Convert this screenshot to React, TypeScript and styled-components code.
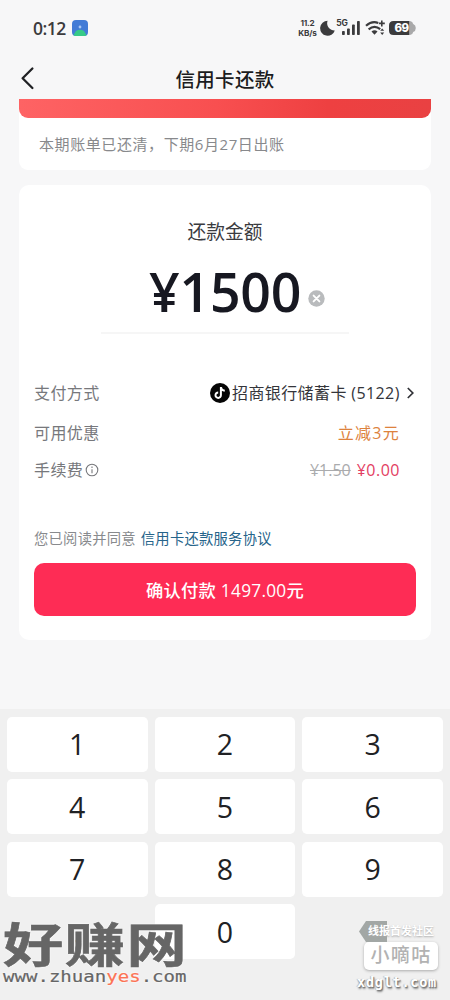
import React from 'react';
import styled, { createGlobalStyle } from 'styled-components';

const Global = createGlobalStyle`
  *, *::before, *::after { box-sizing: border-box; }
  body { margin: 0; background: #f7f7f8; }
  button { border: 0; padding: 0; font: inherit; color: inherit; }
`;

const Screen = styled.div`
  width: 450px;
  height: 1000px;
  overflow: hidden;
  position: relative;
  display: flex;
  flex-direction: column;
  background: #f7f7f8;
  color: #24262d;
  font-family: 'Open Sans', 'Noto Sans CJK SC', sans-serif;
  white-space: nowrap;
`;

const StatusBar = styled.header`
  height: 55px;
  flex: none;
  padding: 0 32px 0 33px;
  display: flex;
  align-items: center;
  color: #3b3b3d;
`;

const Clock = styled.span`
  font: 600 17.5px/24px 'Open Sans', sans-serif;
  width: 34px;
  letter-spacing: -0.5px;
`;

const AppBadge = styled.svg`
  width: 16px;
  height: 16px;
  margin-left: 5px;
`;

const StatusIcons = styled.div`
  margin-left: auto;
  display: flex;
  align-items: center;
`;

const Speed = styled.div`
  font: 700 8.2px/10px Inter, sans-serif;
  width: 19px;
  display: flex;
  flex-direction: column;
  align-items: center;
  letter-spacing: -0.2px;
`;

const StatusGlyphs = styled.svg`
  width: 98px;
  height: 20px;
  margin-left: 3px;
`;

const NavBar = styled.nav`
  height: 44px;
  flex: none;
  display: grid;
  grid-template-columns: 50px 1fr 50px;
  align-items: center;
  padding-top: 2px;
`;

const BackButton = styled.button`
  background: none;
  height: 26px;
  padding-left: 20px;
  display: flex;
  align-items: center;
`;

const Title = styled.h1`
  margin: 3px 0 0;
  text-align: center;
  font-size: 19.5px;
  line-height: 28px;
  font-weight: 500;
  letter-spacing: 0.3px;
  color: #1b1c20;
`;

const Main = styled.main`
  padding: 0 19px;
  flex: 1;
  display: flex;
  flex-direction: column;
  gap: 15px;
`;

const BillCard = styled.section`
  height: 71px;
  background: #fff;
  border-radius: 0 0 9px 9px;
`;

const Banner = styled.div`
  height: 19px;
  border-radius: 0 0 9px 9px;
  background: linear-gradient(90deg, #fe6364, #f84f50 48%, #ee4041 75%, #e94142);
`;

const BillNote = styled.p`
  margin: 0;
  padding: 14px 20px;
  font-size: 15px;
  line-height: 24px;
  letter-spacing: 0.58px;
  color: #88898c;
`;

const PayCard = styled.section`
  height: 455px;
  background: #fff;
  border-radius: 10px;
  padding: 33px 15px 0;
  display: flex;
  flex-direction: column;
`;

const AmountLabel = styled.h2`
  margin: 0;
  text-align: center;
  font-size: 18.8px;
  line-height: 28px;
  font-weight: 400;
  color: #3a3b3f;
`;

const AmountField = styled.div`
  width: 248px;
  height: 88px;
  margin: 0 auto;
  border-bottom: 2px solid #f6f6f6;
  display: flex;
  align-items: center;
  padding: 5px 0 0 48px;
`;

const Amount = styled.span`
  font: 600 53.6px/60px 'Open Sans', sans-serif;
  width: 151px;
  letter-spacing: -0.2px;
  color: #171821;
`;

const ClearButton = styled.button`
  background: none;
  width: 17px;
  height: 17px;
  margin: 13px 0 0 8px;
  display: flex;
`;

const Details = styled.dl`
  margin: 38px 0 0;
  display: grid;
  grid-template-rows: 41px 40px 33px;
`;

const DetailRow = styled.div<{ $flush?: boolean }>`
  display: flex;
  align-items: center;
  justify-content: space-between;
  padding-right: ${(p) => (p.$flush ? '1px' : '16px')};
`;

const Term = styled.dt`
  display: flex;
  align-items: center;
  gap: 2px;
  font-size: 16px;
  line-height: 24px;
  letter-spacing: 0.4px;
  color: #77787c;
`;

const Value = styled.dd<{ $tone?: string }>`
  margin: 0;
  display: flex;
  align-items: center;
  font-size: 16px;
  line-height: 24px;
  letter-spacing: 0.4px;
  color: ${(p) => p.$tone ?? '#34353a'};
`;

const CardName = styled.span`
  width: 169px;
  margin: 0 5px 0 2px;
`;

const Discount = styled.span`
  letter-spacing: 1.3px;
`;

const OldFee = styled.s`
  color: #aaabad;
  margin-right: 6px;
  letter-spacing: 0;
`;

const Fee = styled.span`
  letter-spacing: 0.5px;
`;

const Agreement = styled.p`
  margin: 41px 0 0;
  font-size: 14.3px;
  line-height: 24px;
  letter-spacing: 0.25px;
  color: #888a8d;
`;

const AgreementLink = styled.a`
  color: #26648a;
  margin-left: 5px;
`;

const PayButton = styled.button`
  height: 53px;
  flex: none;
  margin-top: 12px;
  border-radius: 10px;
  background: #fe2c55;
  color: #fff;
  font-size: 17.3px;
  font-weight: 500;
  letter-spacing: 0.25px;
`;

const Keypad = styled.section`
  height: 291px;
  flex: none;
  background: #f0f0f0;
  padding: 7.6px 7px 0;
  display: grid;
  grid-template-columns: repeat(3, 1fr);
  grid-auto-rows: 55.3px;
  gap: 7.2px;
  align-content: start;
`;

const Key = styled.button<{ $plain?: boolean }>`
  border-radius: 5px;
  background: ${(p) => (p.$plain ? 'transparent' : '#fff')};
  color: #202124;
  font: 400 28.5px/40px 'Open Sans', sans-serif;
`;

const SiteMark = styled.div`
  position: absolute;
  left: 3px;
  top: 919px;
  width: 188px;
  height: 72px;
  color: #666;
`;

const SiteName = styled.div`
  font-size: 47px;
  line-height: 51px;
  height: 51px;
  font-weight: 700;
  letter-spacing: 1.2px;
  transform: scaleX(1.28);
  transform-origin: 0 0;
  width: 146px;
  -webkit-text-stroke: 0.6px #666;
  text-shadow: 0 0 2px #fff, 0 0 2px #fff;
`;

const SiteUrl = styled.div`
  font: 400 15px/18px 'DejaVu Sans Mono', monospace;
  transform: scaleX(1.27);
  transform-origin: 0 0;
  width: 146px;
  margin-top: -2px;
  -webkit-text-stroke: 0.2px currentColor;
  text-shadow: 0 0 2px #fff, 0 0 2px #fff;

  em {
    font-style: normal;
    color: #fb7355;
  }
`;

const ForumMark = styled.div`
  position: absolute;
  left: 355px;
  top: 921px;
  width: 86px;
  height: 76px;
  color: #fff;
`;

const ForumTag = styled.div`
  height: 21px;
  margin-left: 4px;
  padding-left: 9px;
  font-size: 11px;
  line-height: 19px;
  font-weight: 700;
  background: linear-gradient(#a2a7a5, #a2a7a5) 0 0 / 28px 21px no-repeat;
  clip-path: polygon(7px 0, 100% 0, 100% 100%, 7px 100%, 0 50%);
  text-shadow: 0 1px 2px #aaa;
`;

const ForumName = styled.div`
  width: 74px;
  height: 28px;
  margin-left: 9px;
  border-radius: 5px;
  background: #fff;
  box-shadow: 0 1px 3px #aaa;
  color: #b2b2b2;
  text-align: center;
  font-size: 19px;
  line-height: 27px;
  font-weight: 500;
  letter-spacing: 1.4px;
`;

const ForumUrl = styled.div`
  font: 700 13.5px/18px 'DejaVu Sans Mono', monospace;
  letter-spacing: 0.75px;
  margin: 3px 0 0 2px;
  text-shadow: 1px 1px 1px #777, 1px 2px 2px #888, -1px 0 1px #bbb;
`;

const keys = ['1', '2', '3', '4', '5', '6', '7', '8', '9', '.', '0'];

export default function App() {
  return (
    <>
      <Global />
      <Screen lang="zh-CN">
        <StatusBar>
          <Clock>0:12</Clock>
          <AppBadge viewBox="0 0 16 16">
            <defs>
              <clipPath id="badge"><rect width="16" height="16" rx="4" /></clipPath>
            </defs>
            <g clipPath="url(#badge)">
              <rect width="16" height="16" fill="#427bd6" />
              <path d="M1 16 L4 11 Q8 8.5 12 11 L15 16Z" fill="#36ca87" />
              <circle cx="8" cy="7" r="1.4" fill="#a9c7f3" />
            </g>
          </AppBadge>
          <StatusIcons>
            <Speed><span>11.2</span><span>KB/s</span></Speed>
            <StatusGlyphs viewBox="0 0 98 20" fill="#3b3b3d">
              <path d="M7.6 2.7 A7.5 7.5 0 1 0 14.8 12.4 A7.2 7.2 0 0 1 7.6 2.7Z" />
              <text x="16.2" y="7.8" fontSize="8.5" fontWeight="700" fontFamily="Inter, sans-serif">5G</text>
              <rect x="22" y="13" width="2.8" height="4" rx="0.8" />
              <rect x="27" y="10.5" width="2.8" height="6.5" rx="0.8" />
              <rect x="32" y="6.5" width="2.8" height="10.5" rx="0.8" />
              <rect x="37" y="3" width="2.8" height="14" rx="0.8" />
              <g fill="none" stroke="#3b3b3d" strokeWidth="2.2">
                <path d="M46 7.8 Q52 2.4 58.2 5" />
                <path d="M48.6 11.4 Q54.5 6.5 60.2 11.2" />
                <path d="M58.8 5.4h6M61.8 2.4v6" strokeWidth="1.6" />
              </g>
              <path d="M51.5 13.5 Q54.5 11 57.5 13.5 L54.5 16.8Z" />
              <path d="M60.2 12.8l2-2.2 2 2.2zM60.2 14.6h4l-2 2.4z" />
              <path d="M90 3 Q92.8 3.3 93.2 6 Q95.8 7 95.8 10 Q95.8 13 93.2 14 Q92.8 16.7 90 17Z" fill="#a9a9aa" />
              <path d="M73.5 3H89.5V17H73.5Q69 17 69 12.5V7.5Q69 3 73.5 3Z" />
              <text x="74.5" y="14.2" fill="#fff" fontSize="11.5" fontWeight="800" fontFamily="Inter, sans-serif" letterSpacing="-0.5">69</text>
            </StatusGlyphs>
          </StatusIcons>
        </StatusBar>
        <NavBar>
          <BackButton aria-label="返回">
            <svg width="15" height="24" viewBox="0 0 15 24" fill="none" stroke="#202124" strokeWidth="2.3" strokeLinecap="round" strokeLinejoin="round">
              <path d="M12.4 2.5 2.6 12.2l9.8 9.8" />
            </svg>
          </BackButton>
          <Title>信用卡还款</Title>
        </NavBar>
        <Main>
          <BillCard>
            <Banner />
            <BillNote>本期账单已还清，下期6月27日出账</BillNote>
          </BillCard>
          <PayCard>
            <AmountLabel>还款金额</AmountLabel>
            <AmountField>
              <Amount>¥1500</Amount>
              <ClearButton aria-label="清除">
                <svg width="17" height="17" viewBox="0 0 17 17">
                  <circle cx="8.5" cy="8.5" r="8.2" fill="#b9bbbd" />
                  <path d="M5.6 5.6l5.8 5.8M11.4 5.6l-5.8 5.8" stroke="#fff" strokeWidth="1.9" strokeLinecap="round" />
                </svg>
              </ClearButton>
            </AmountField>
            <Details>
              <DetailRow $flush>
                <Term>支付方式</Term>
                <Value>
                  <svg width="20" height="20" viewBox="0 0 20 20">
                    <circle cx="10" cy="10" r="10" fill="#050505" />
                    <path d="M10.9 4v8.1a2.7 2.7 0 1 1-2.7-2.6M10.9 4.2c.3 2.2 1.8 3.4 3.9 3.6" fill="none" stroke="#fff" strokeWidth="2" />
                  </svg>
                  <CardName>招商银行储蓄卡 (5122)</CardName>
                  <svg width="9" height="14" viewBox="0 0 9 14" fill="none" stroke="#303136" strokeWidth="1.7">
                    <path d="M1.8 2 6.8 7l-5 5" />
                  </svg>
                </Value>
              </DetailRow>
              <DetailRow>
                <Term>可用优惠</Term>
                <Value $tone="#dd823d"><Discount>立减3元</Discount></Value>
              </DetailRow>
              <DetailRow>
                <Term>
                  手续费
                  <svg width="14" height="14" viewBox="0 0 14 14" fill="none" stroke="#77787c" strokeWidth="1.1">
                    <circle cx="7" cy="7" r="5.8" />
                    <path d="M7 6.2v4M7 3.6v1.3" />
                  </svg>
                </Term>
                <Value $tone="#e33d62"><OldFee>¥1.50</OldFee><Fee>¥0.00</Fee></Value>
              </DetailRow>
            </Details>
            <Agreement>您已阅读并同意<AgreementLink>信用卡还款服务协议</AgreementLink></Agreement>
            <PayButton>确认付款 1497.00元</PayButton>
          </PayCard>
        </Main>
        <Keypad>
          {keys.map((k) => <Key key={k} $plain={k === '.'}>{k}</Key>)}
        </Keypad>
        <SiteMark>
          <SiteName>好赚网</SiteName>
          <SiteUrl>www.zhuan<em>yes</em>.com</SiteUrl>
        </SiteMark>
        <ForumMark>
          <ForumTag>线报首发社区</ForumTag>
          <ForumName>小嘀咕</ForumName>
          <ForumUrl>xdglt.com</ForumUrl>
        </ForumMark>
      </Screen>
    </>
  );
}
